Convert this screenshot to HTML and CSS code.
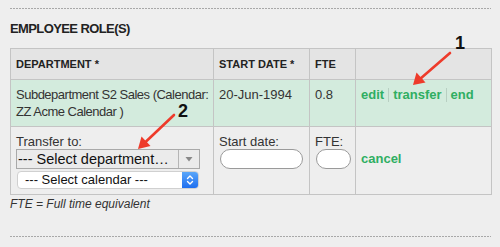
FILE: index.html
```html
<!DOCTYPE html>
<html>
<head>
<meta charset="utf-8">
<link rel="stylesheet" href="styles.css">
</head>
<body>
<div class="page">
  <div class="rule"></div>
  <h2 class="title">EMPLOYEE ROLE(S)</h2>
  <table class="roles">
    <colgroup>
      <col class="c-dept"><col class="c-date"><col class="c-fte"><col class="c-act">
    </colgroup>
    <thead>
      <tr><th>DEPARTMENT *</th><th>START DATE *</th><th>FTE</th><th></th></tr>
    </thead>
    <tbody>
      <tr class="current">
        <td class="dept">Subdepartment S2 Sales (Calendar:<br>ZZ Acme Calendar )</td>
        <td>20-Jun-1994</td>
        <td>0.8</td>
        <td class="links"><a class="lnk">edit</a><span class="sep"></span><a class="lnk">transfer</a><span class="sep"></span><a class="lnk">end</a></td>
      </tr>
      <tr class="edit">
        <td>
          <div class="lbl">Transfer to:</div>
          <div class="dsel"><span class="dsel-text">--- Select department…</span><span class="dsel-btn"><svg width="8" height="6" viewBox="0 0 8 6"><path d="M0.5 1 L7.5 1 L4 5.5 Z" fill="#888"/></svg></span></div>
          <div class="csel"><span class="csel-text">--- Select calendar ---</span><span class="csel-btn"><svg width="8" height="12" viewBox="0 0 8 12"><path d="M1.5 4.5 L4 2 L6.5 4.5 M1.5 7.5 L4 10 L6.5 7.5" fill="none" stroke="#fff" stroke-width="1.4" stroke-linecap="round" stroke-linejoin="round"/></svg></span></div>
        </td>
        <td>
          <div class="lbl">Start date:</div>
          <input class="pill pill-date" type="text">
        </td>
        <td>
          <div class="lbl">FTE:</div>
          <input class="pill pill-fte" type="text">
        </td>
        <td class="links cancel-cell"><a class="lnk">cancel</a></td>
      </tr>
    </tbody>
  </table>
  <p class="note">FTE = Full time equivalent</p>
  <div class="rule rule-bottom"></div>

  <svg class="annot" width="500" height="247" viewBox="0 0 500 247">
    <line x1="450" y1="53" x2="420" y2="79" stroke="#ee3b2b" stroke-width="2.6" stroke-linecap="round"/>
    <polygon points="413,85 416.5,72.5 425.5,82.5" fill="#ee3b2b"/>
    <line x1="174" y1="115" x2="145" y2="142.5" stroke="#ee3b2b" stroke-width="2.6" stroke-linecap="round"/>
    <polygon points="138,149 141.5,136.5 150.5,146" fill="#ee3b2b"/>
  </svg>
  <span class="num num1">1</span>
  <span class="num num2">2</span>
</div>
</body>
</html>
```
FILE: styles.css
```css
html, body {
  margin: 0;
  padding: 0;
  background: #eeeeee;
}
body {
  font-family: "Liberation Sans", Arial, sans-serif;
  font-size: 13px;
  color: #333;
}
.page {
  position: relative;
  width: 481px;
  height: 247px;
  padding: 8px 9px 0 10px;
  box-sizing: content-box;
}
.rule {
  height: 1px;
  background: repeating-linear-gradient(to right, #a8a8a8 0 2px, transparent 2px 3px);
}
.title {
  margin: 12px 0 11px;
  font-size: 13px;
  line-height: 16px;
  font-weight: bold;
  letter-spacing: -0.6px;
  color: #222;
}
.roles {
  width: 481px;
  border-collapse: collapse;
  table-layout: fixed;
  border: 1px solid #c4c4c4;
}
.c-dept { width: 203px; }
.c-date { width: 96px; }
.c-fte { width: 46px; }
.c-act { width: 136px; }
.roles th, .roles td {
  border: 1px solid #c4c4c4;
  text-align: left;
  vertical-align: top;
}
.roles th {
  background: #e4e4e4;
  font-size: 11px;
  font-weight: bold;
  line-height: 14px;
  padding: 8px 5px;
  color: #222;
}
.current td {
  background: #d3ebdd;
  padding: 6px 5px;
  line-height: 17px;
}
.current .dept {
  white-space: nowrap;
  letter-spacing: -0.5px;
}
.edit td {
  padding: 7px 5px 5px;
}
.lbl {
  line-height: 15px;
  color: #333;
}
.links .lnk {
  color: #2fae62;
  font-weight: bold;
  text-decoration: none;
}
.sep {
  display: inline-block;
  width: 1px;
  height: 14px;
  background: #b8cfc2;
  margin: 0 4px 0 4px;
  vertical-align: -3px;
}
.cancel-cell.cancel-cell {
  padding-top: 24px;
  line-height: 15px;
}
.dsel {
  display: flex;
  width: 184px;
  height: 20px;
  box-sizing: border-box;
  border: 1px solid #a9a9a9;
  background: #ebebeb;
}
.dsel-text {
  flex: 1;
  font-size: 14.5px;
  line-height: 18px;
  color: #111;
  padding-left: 1px;
  white-space: nowrap;
  overflow: hidden;
}
.dsel-btn {
  width: 20px;
  border-left: 1px solid #b5b5b5;
  display: flex;
  align-items: center;
  justify-content: center;
}
.csel {
  display: flex;
  width: 182px;
  height: 18px;
  margin: 2px 0 0 1px;
  box-sizing: border-box;
  border: 1px solid #d0d0d0;
  border-radius: 4px;
  background: #fff;
  overflow: hidden;
}
.csel-text {
  flex: 1;
  font-size: 13px;
  line-height: 16px;
  color: #111;
  padding-left: 7px;
}
.csel-btn {
  width: 16px;
  background: linear-gradient(#5aa6f9, #1f6ff0);
  display: flex;
  align-items: center;
  justify-content: center;
}
.pill {
  display: block;
  height: 20px;
  box-sizing: border-box;
  border: 1px solid #9a9a9a;
  border-radius: 10px;
  background: #fff;
  margin: 0 0 0 1px;
  padding: 0 6px;
  outline: none;
}
.pill-date { width: 83px; }
.pill-fte { width: 35px; }
.note {
  margin: 2px 0 0;
  font-size: 12px;
  line-height: 15px;
  font-style: italic;
  color: #333;
}
.rule-bottom {
  margin-top: 24px;
}
.annot {
  position: absolute;
  left: 0;
  top: 0;
  pointer-events: none;
}
.num {
  position: absolute;
  font-size: 18px;
  font-weight: bold;
  line-height: 18px;
  color: #111;
}
.num1 { left: 455px; top: 34px; }
.num2 { left: 178px; top: 102px; }
```
